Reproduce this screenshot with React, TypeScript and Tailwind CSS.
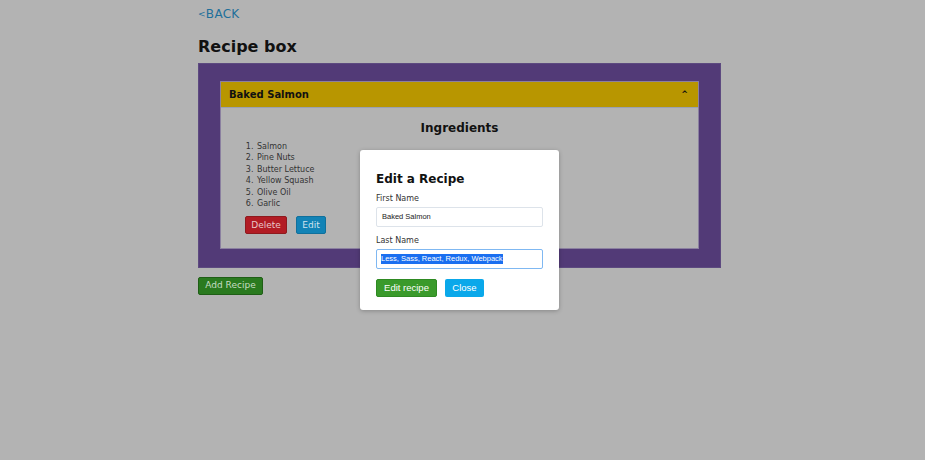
import React from 'react';

const ingredients = ['Salmon', 'Pine Nuts', 'Butter Lettuce', 'Yellow Squash', 'Olive Oil', 'Garlic'];

const verdana = { fontFamily: '"DejaVu Sans", Verdana, sans-serif' };
const arial = { fontFamily: '"Liberation Sans", Arial, sans-serif' };

export default function App() {
    return (
        <div className="relative min-h-[460px] w-full bg-[#b3b3b3] text-[#111]" style={verdana}>
            <div className="ml-[198px] w-[523px] pt-[7px]">
                <a className="block text-[12px] leading-[14px] text-[#1e6f9a] tracking-[0.3px]">
                    <span className="text-[9px] align-[1px]">&lt;</span>BACK
                </a>
                <h1 className="mt-[16px] text-[16px] font-bold leading-[20px]">Recipe box</h1>

                <div className="mt-[6px] h-[205px] bg-[#523a77] border border-[#5d4a80] pt-[17px] px-[21px]">
                    <div className="border border-[#8b80a0]">
                        <div className="flex h-[25px] items-center justify-between bg-[#b89600] pl-[8px] pr-[10px]">
                            <span className="text-[10px] font-bold">Baked Salmon</span>
                            <span className="text-[8px] font-bold leading-none">^</span>
                        </div>
                        <div className="h-[141px] bg-[#b3b3b3] border-t border-[#9aa0b0] px-[24px] pt-[13px]">
                            <h2 className="text-center text-[12px] font-bold leading-[14px]">Ingredients</h2>
                            <ol className="mt-[6px] ml-[11px] list-decimal text-[8px] leading-[11.4px] text-[#333]">
                                {ingredients.map((item) => (
                                    <li key={item} className="pl-[1px]">{item}</li>
                                ))}
                            </ol>
                            <div className="mt-[7px] flex gap-[9px]">
                                <button className="h-[18px] w-[42px] rounded-[2px] border border-[#8e1a1e] bg-[#b21c24] text-[9px] text-[#e8c8c8]">Delete</button>
                                <button className="h-[18px] w-[30px] rounded-[2px] border border-[#10709c] bg-[#1283b6] text-[9px] text-[#cfe3ee]">Edit</button>
                            </div>
                        </div>
                    </div>
                </div>

                <button className="mt-[9px] h-[18px] w-[65px] rounded-[2px] border border-[#1f5e16] bg-[#2a7a1f] text-[9px] text-[#c7dcc4]">Add Recipe</button>
            </div>

            <div className="absolute inset-0 flex items-start justify-center pt-[150px]">
                <div className="ml-[-6px] w-[199px] h-[160px] rounded-[3px] bg-white shadow-[0_1px_4px_rgba(0,0,0,0.25)] px-[16px] pt-[22px]">
                    <h3 className="text-[12px] font-bold leading-[14px] text-[#111]">Edit a Recipe</h3>
                    <label className="mt-[8px] block text-[8px] leading-[10px] text-[#333]">First Name</label>
                    <div className="mt-[3px] flex h-[20px] items-center rounded-[2px] border border-[#dde3ea] px-[5px] text-[7.5px] text-[#222]" style={arial}>
                        Baked Salmon
                    </div>
                    <label className="mt-[9px] block text-[8px] leading-[10px] text-[#333]">Last Name</label>
                    <div className="mt-[3px] flex h-[20px] items-center rounded-[2px] border border-[#7fb8f2] px-[4px] text-[7.5px]" style={arial}>
                        <span className="bg-[#1a6ff0] text-white leading-[10px]">Less, Sass, React, Redux, Webpack</span>
                    </div>
                    <div className="mt-[10px] flex gap-[8px]" style={arial}>
                        <button className="h-[18px] w-[61px] rounded-[2px] border border-[#2e8a22] bg-[#3a9a2b] text-[9.5px] text-white">Edit recipe</button>
                        <button className="h-[18px] w-[39px] rounded-[2px] bg-[#0aa8ea] text-[9.5px] text-white">Close</button>
                    </div>
                </div>
            </div>
        </div>
    );
}
